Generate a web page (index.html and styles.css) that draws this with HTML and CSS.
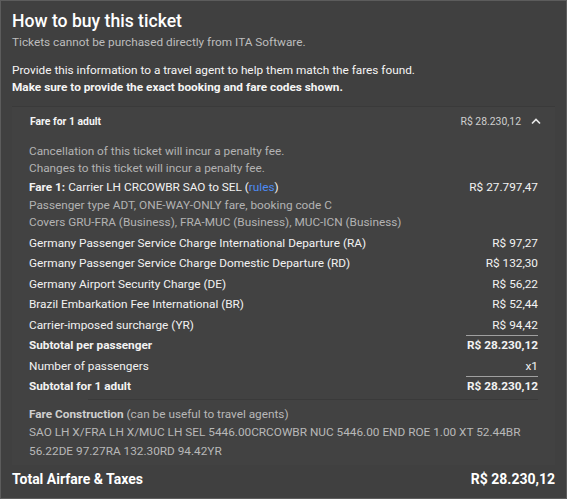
FILE: index.html
```html
<!DOCTYPE html>
<html>
<head>
<meta charset="utf-8">
<link rel="stylesheet" href="styles.css">
</head>
<body>
<div class="page">
  <h1 class="title">How to buy this ticket</h1>
  <p class="sub">Tickets cannot be purchased directly from ITA Software.</p>
  <p class="info">Provide this information to a travel agent to help them match the fares found.</p>
  <p class="info strong">Make sure to provide the exact booking and fare codes shown.</p>

  <div class="panel">
    <div class="panel-head">
      <span class="ph-title">Fare for 1 adult</span>
      <span class="ph-right">
        <span class="ph-price">R$ 28.230,12</span>
        <svg class="chev" width="12" height="8" viewBox="0 0 12 8"><path d="M2 6.5 L6 2.5 L10 6.5" fill="none" stroke="#e8e8e8" stroke-width="1.7"/></svg>
      </span>
    </div>
    <div class="panel-body">
      <div class="notes">
        <div class="muted">Cancellation of this ticket will incur a penalty fee.</div>
        <div class="muted">Changes to this ticket will incur a penalty fee.</div>
      </div>
      <div class="fare">
        <div class="row tight">
          <span><b class="semi">Fare 1:</b> Carrier LH CRCOWBR SAO to SEL (<span class="link">rules</span>)</span>
          <span>R$ 27.797,47</span>
        </div>
        <div class="muted tight">Passenger type ADT, ONE-WAY-ONLY fare, booking code C</div>
        <div class="muted tight">Covers GRU-FRA (Business), FRA-MUC (Business), MUC-ICN (Business)</div>
      </div>
      <div class="row"><span>Germany Passenger Service Charge International Departure (RA)</span><span>R$ 97,27</span></div>
      <div class="row"><span>Germany Passenger Service Charge Domestic Departure (RD)</span><span>R$ 132,30</span></div>
      <div class="row"><span>Germany Airport Security Charge (DE)</span><span>R$ 56,22</span></div>
      <div class="row"><span>Brazil Embarkation Fee International (BR)</span><span>R$ 52,44</span></div>
      <div class="row"><span>Carrier-imposed surcharge (YR)</span><span>R$ 94,42</span></div>
      <div class="row bold"><span>Subtotal per passenger</span><span class="ruled">R$ 28.230,12</span></div>
      <div class="row"><span>Number of passengers</span><span>x1</span></div>
      <div class="row bold"><span>Subtotal for 1 adult</span><span class="ruled">R$ 28.230,12</span></div>
      <div class="construction">
        <div><b class="semi">Fare Construction</b> (can be useful to travel agents)</div>
        <div>SAO LH X/FRA LH X/MUC LH SEL 5446.00CRCOWBR NUC 5446.00 END ROE 1.00 XT 52.44BR 56.22DE 97.27RA 132.30RD 94.42YR</div>
      </div>
    </div>
  </div>

  <div class="total">
    <span>Total Airfare &amp; Taxes</span>
    <span>R$ 28.230,12</span>
  </div>
</div>
</body>
</html>
```

FILE: styles.css
```css
html, body {
  margin: 0;
  padding: 0;
  background: #404040;
}
body {
  width: 567px;
  height: 499px;
  box-sizing: border-box;
  border: 1px solid #5c5c5c;
  font-family: Roboto, "Liberation Sans", sans-serif;
  color: #f2f2f2;
  overflow: hidden;
}
.page {
  padding: 7px 11px 0 11px;
}
.title {
  margin: 0;
  font-size: 17.6px;
  font-weight: 500;
  line-height: 26px;
  color: #ffffff;
}
.sub {
  margin: 0 0 12px 0;
  font-size: 11.8px;
  line-height: 16px;
  color: #bdbdbd;
}
.info {
  margin: 0;
  font-size: 11.8px;
  line-height: 17px;
  color: #f5f5f5;
}
.info.strong {
  font-weight: 700;
}
.panel {
  margin-top: 10px;
  background: #424242;
  border-top: 1px solid #3a3a3a;
  padding-bottom: 5px;
}
.panel-head {
  display: flex;
  justify-content: space-between;
  align-items: center;
  height: 28px;
  padding: 0 13px 0 18px;
}
.ph-title {
  font-size: 10.4px;
  font-weight: 700;
  color: #f5f5f5;
}
.ph-right {
  display: flex;
  align-items: center;
  gap: 9px;
}
.ph-price {
  font-size: 10.4px;
  color: #cfcfcf;
}
.chev {
  display: block;
}
.panel-body {
  padding: 8px 17px 0 17px;
  font-size: 11.8px;
}
.muted {
  color: #b3b3b3;
}
.notes {
  line-height: 17px;
  margin-bottom: 2px;
}
.fare {
  line-height: 17.5px;
  margin-bottom: 1px;
}
.row {
  display: flex;
  justify-content: space-between;
  align-items: flex-end;
  line-height: 20.5px;
  color: #f2f2f2;
}
.row.tight {
  line-height: 17.5px;
}
.row.bold {
  font-weight: 700;
}
.semi {
  font-weight: 700;
}
.link {
  color: #4c8bf5;
}
.ruled {
  border-top: 1px solid #a0a0a0;
  min-width: 72px;
  text-align: right;
  line-height: 19.5px;
}
.construction {
  position: relative;
  margin-top: 2px;
  padding-top: 6px;
  color: #b8b8b8;
  line-height: 18.5px;
}
.construction::before {
  content: "";
  position: absolute;
  top: 0;
  left: 59px;
  right: 0;
  border-top: 1px solid #3a3a3a;
}
.construction .semi {
  color: #cfcfcf;
}
.total {
  display: flex;
  justify-content: space-between;
  padding: 6px 0 0 0;
  font-size: 14px;
  line-height: 17px;
  font-weight: 700;
  color: #ffffff;
}
```
